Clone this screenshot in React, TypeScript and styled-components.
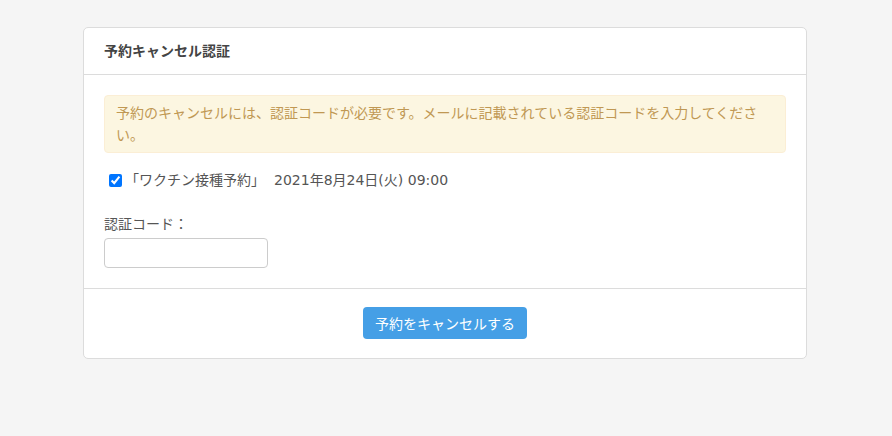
import styled, { createGlobalStyle } from "styled-components";

const GlobalStyle = createGlobalStyle`
  html, body {
    margin: 0;
    padding: 0;
    background: #f5f5f5;
  }
  body {
    font-family: "DejaVu Sans", "Noto Sans CJK JP", sans-serif;
    font-size: 14px;
    color: #555;
  }
`;

const Page = styled.div`
  padding: 27px 2px 40px 0;
`;

const Card = styled.div`
  width: 724px;
  margin: 0 auto;
  box-sizing: border-box;
  background: #fff;
  border: 1px solid #dcdcdc;
  border-radius: 5px;
`;

const CardHeader = styled.div`
  padding: 12px 20px;
  line-height: 22px;
  font-size: 14px;
  font-weight: 700;
  color: #444;
  border-bottom: 1px solid #dcdcdc;
`;

const CardBody = styled.div`
  padding: 20px;
`;

const Alert = styled.div`
  padding: 6px 11px;
  line-height: 22px;
  background: #fcf6e1;
  border: 1px solid #fbeed5;
  border-radius: 4px;
  color: #c09853;
`;

const CheckRow = styled.label`
  display: flex;
  align-items: center;
  margin: 16px 0 22px 5px;
  line-height: 22px;
  color: #555;
`;

const Check = styled.input`
  width: 13px;
  height: 13px;
  margin: 0 3px 0 0;
`;

const DateText = styled.span`
  margin-left: 9px;
`;

const FieldLabel = styled.div`
  line-height: 22px;
  margin-bottom: 3px;
  color: #555;
`;

const TextInput = styled.input`
  display: block;
  width: 164px;
  height: 30px;
  box-sizing: border-box;
  border: 1px solid #ccc;
  border-radius: 4px;
  padding: 4px 8px;
  font: inherit;
`;

const CardFooter = styled.div`
  border-top: 1px solid #dcdcdc;
  padding: 18px 0 19px;
  display: flex;
  justify-content: center;
`;

const SubmitButton = styled.button`
  height: 32px;
  width: 164px;
  border: none;
  border-radius: 4px;
  background: #459fe6;
  color: #fff;
  font-family: "Noto Sans CJK JP", sans-serif;
  font-size: 14px;
  cursor: pointer;
`;

export default function App() {
  return (
    <>
      <GlobalStyle />
      <Page>
        <Card>
          <CardHeader>予約キャンセル認証</CardHeader>
          <CardBody>
            <Alert>
              予約のキャンセルには、認証コードが必要です。メールに記載されている認証コードを入力してください。
            </Alert>
            <CheckRow>
              <Check type="checkbox" defaultChecked />
              <span>「ワクチン接種予約」</span>
              <DateText>2021年8月24日(火) 09:00</DateText>
            </CheckRow>
            <FieldLabel>認証コード：</FieldLabel>
            <TextInput type="text" />
          </CardBody>
          <CardFooter>
            <SubmitButton type="button">予約をキャンセルする</SubmitButton>
          </CardFooter>
        </Card>
      </Page>
    </>
  );
}
